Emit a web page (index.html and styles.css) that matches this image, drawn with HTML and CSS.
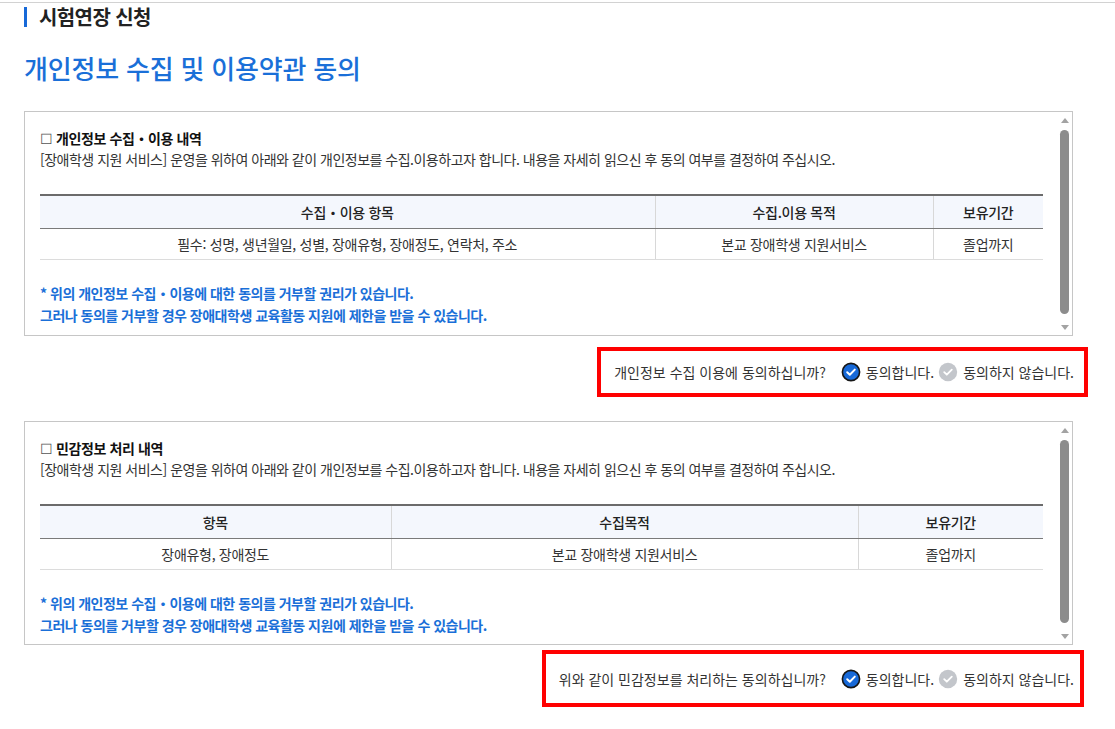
FILE: index.html
```html
<!DOCTYPE html>
<html lang="ko">
<head>
<meta charset="utf-8">
<title>시험연장 신청</title>
<link rel="stylesheet" href="styles.css">
</head>
<body>
<div class="topbar"></div>
<div class="page">
  <h2 class="section-title">시험연장 신청</h2>
  <h1 class="page-title">개인정보 수집 및 이용약관 동의</h1>

  <div class="panel">
    <div class="panel-body">
      <p class="panel-heading"><span class="box-mark">☐</span> 개인정보 수집・이용 내역</p>
      <p class="panel-desc">[장애학생 지원 서비스] 운영을 위하여 아래와 같이 개인정보를 수집.이용하고자 합니다. 내용을 자세히 읽으신 후 동의 여부를 결정하여 주십시오.</p>
      <table class="info-table">
        <colgroup>
          <col class="c1a"><col class="c2a"><col class="c3a">
        </colgroup>
        <thead>
          <tr><th>수집・이용 항목</th><th>수집.이용 목적</th><th>보유기간</th></tr>
        </thead>
        <tbody>
          <tr><td>필수: 성명, 생년월일, 성별, 장애유형, 장애정도, 연락처, 주소</td><td>본교 장애학생 지원서비스</td><td>졸업까지</td></tr>
        </tbody>
      </table>
      <p class="notice">* 위의 개인정보 수집・이용에 대한 동의를 거부할 권리가 있습니다.<br>그러나 동의를 거부할 경우 장애대학생 교육활동 지원에 제한을 받을 수 있습니다.</p>
    </div>
    <div class="scrollbar">
      <span class="arrow-up"></span>
      <span class="thumb"></span>
      <span class="arrow-down"></span>
    </div>
  </div>

  <div class="consent consent-a">
    <div class="consent-box">
      <span class="question">개인정보 수집 이용에 동의하십니까?</span>
      <label class="choice">
        <svg class="check" width="20" height="20" viewBox="0 0 20 20"><circle cx="10" cy="10" r="8.6" fill="#1769d8" stroke="#161616" stroke-width="1.6"/><path d="M6.2 10.2 L8.8 12.7 L13.8 7.6" fill="none" stroke="#fff" stroke-width="2" stroke-linecap="round" stroke-linejoin="round"/></svg>
        <span>동의합니다.</span>
      </label>
      <label class="choice">
        <svg class="check" width="20" height="20" viewBox="0 0 20 20"><circle cx="10" cy="10" r="9.2" fill="#c3c6cb"/><path d="M6.2 10.2 L8.8 12.7 L13.8 7.6" fill="none" stroke="#fff" stroke-width="1.8" stroke-linecap="round" stroke-linejoin="round"/></svg>
        <span>동의하지 않습니다.</span>
      </label>
    </div>
  </div>

  <div class="panel panel-second">
    <div class="panel-body">
      <p class="panel-heading"><span class="box-mark">☐</span> 민감정보 처리 내역</p>
      <p class="panel-desc">[장애학생 지원 서비스] 운영을 위하여 아래와 같이 개인정보를 수집.이용하고자 합니다. 내용을 자세히 읽으신 후 동의 여부를 결정하여 주십시오.</p>
      <table class="info-table">
        <colgroup>
          <col class="c1b"><col class="c2b"><col class="c3b">
        </colgroup>
        <thead>
          <tr><th>항목</th><th>수집목적</th><th>보유기간</th></tr>
        </thead>
        <tbody>
          <tr><td>장애유형, 장애정도</td><td>본교 장애학생 지원서비스</td><td>졸업까지</td></tr>
        </tbody>
      </table>
      <p class="notice">* 위의 개인정보 수집・이용에 대한 동의를 거부할 권리가 있습니다.<br>그러나 동의를 거부할 경우 장애대학생 교육활동 지원에 제한을 받을 수 있습니다.</p>
    </div>
    <div class="scrollbar">
      <span class="arrow-up"></span>
      <span class="thumb"></span>
      <span class="arrow-down"></span>
    </div>
  </div>

  <div class="consent consent-b">
    <div class="consent-box">
      <span class="question">위와 같이 민감정보를 처리하는 동의하십니까?</span>
      <label class="choice">
        <svg class="check" width="20" height="20" viewBox="0 0 20 20"><circle cx="10" cy="10" r="8.6" fill="#1769d8" stroke="#161616" stroke-width="1.6"/><path d="M6.2 10.2 L8.8 12.7 L13.8 7.6" fill="none" stroke="#fff" stroke-width="2" stroke-linecap="round" stroke-linejoin="round"/></svg>
        <span>동의합니다.</span>
      </label>
      <label class="choice">
        <svg class="check" width="20" height="20" viewBox="0 0 20 20"><circle cx="10" cy="10" r="9.2" fill="#c3c6cb"/><path d="M6.2 10.2 L8.8 12.7 L13.8 7.6" fill="none" stroke="#fff" stroke-width="1.8" stroke-linecap="round" stroke-linejoin="round"/></svg>
        <span>동의하지 않습니다.</span>
      </label>
    </div>
  </div>
</div>
</body>
</html>
```

FILE: styles.css
```css
html, body {
  margin: 0;
  padding: 0;
  background: #fff;
}
body {
  font-family: "Noto Sans CJK KR", "Noto Sans", sans-serif;
  color: #333;
}
.topbar {
  margin-top: 2px;
  height: 1px;
  background: #d2d2d2;
}
.page {
  padding-left: 24px;
  width: 1049px;
}
.section-title {
  margin: 4px 0 0 0;
  border-left: 3px solid #1769d8;
  padding-left: 12px;
  font-size: 20px;
  line-height: 20px;
  font-weight: 700;
  color: #222;
  letter-spacing: -0.6px;
}
.page-title {
  margin: 25px 0 0 0;
  font-size: 26px;
  line-height: 32px;
  font-weight: 500;
  color: #1a6fd8;
  letter-spacing: -0.2px;
}
.panel {
  margin-top: 27px;
  height: 225px;
  box-sizing: border-box;
  border: 1px solid #c6c6c6;
  display: flex;
  overflow: hidden;
}
.panel-second {
  margin-top: 24px;
  height: 224px;
}
.panel-body {
  flex: 1;
  padding: 16px 15px 0 15px;
  overflow: hidden;
}
.panel-heading {
  margin: 0;
  font-size: 14px;
  line-height: 21px;
  font-weight: 700;
  color: #111;
  letter-spacing: -0.4px;
}
.box-mark {
  font-weight: 400;
  color: #555;
  letter-spacing: -0.5px;
}
.panel-desc {
  margin: 0;
  font-size: 14px;
  line-height: 21px;
  color: #333;
  letter-spacing: -0.5px;
}
.info-table {
  margin-top: 24px;
  width: 100%;
  border-collapse: collapse;
  table-layout: fixed;
  border-top: 2px solid #6b6b6b;
  font-size: 14px;
  letter-spacing: -0.3px;
}
.c1a { width: 615px; }
.c2a { width: 278px; }
.c3a { width: 110px; }
.c1b { width: 351px; }
.c2b { width: 467px; }
.c3b { width: 185px; }
.info-table th {
  height: 32px;
  padding: 0;
  background: #f4f7fd;
  font-weight: 500;
  color: #222;
  border-bottom: 1px solid #7a7a7a;
  border-left: 1px solid #d8d8d8;
}
.info-table td {
  height: 30px;
  padding: 0;
  text-align: center;
  color: #333;
  border-bottom: 1px solid #dcdcdc;
  border-left: 1px solid #d8d8d8;
}
.info-table th:first-child,
.info-table td:first-child {
  border-left: none;
}
.notice {
  margin: 22px 0 0 0;
  font-size: 14px;
  line-height: 22px;
  font-weight: 700;
  color: #1a6fd8;
  letter-spacing: -0.5px;
}
.scrollbar {
  width: 15px;
  display: flex;
  flex-direction: column;
  align-items: center;
  padding: 6px 0 5px 0;
  box-sizing: border-box;
}
.arrow-up {
  width: 0;
  height: 0;
  border-left: 4px solid transparent;
  border-right: 4px solid transparent;
  border-bottom: 5px solid #a3a3a3;
}
.arrow-down {
  width: 0;
  height: 0;
  border-left: 4px solid transparent;
  border-right: 4px solid transparent;
  border-top: 5px solid #a3a3a3;
}
.thumb {
  width: 9px;
  flex: 1;
  margin: 7px 0 11px 0;
  background: #8c8c8c;
  border-radius: 5px;
}
.consent {
  display: flex;
  justify-content: flex-end;
}
.consent-a {
  margin-top: 11px;
  margin-right: -15px;
}
.consent-b {
  margin-top: 5px;
  margin-right: -11px;
}
.consent-box {
  border: 4px solid #ff0000;
  display: flex;
  align-items: center;
  font-size: 14px;
  line-height: 20px;
  color: #333;
  letter-spacing: 0;
}
.consent-a .consent-box {
  padding: 11px 10px 11px 13px;
}
.consent-b .consent-box {
  padding: 15px 6px 14px 13px;
}
.question {
  margin-right: 15px;
}
.choice {
  display: flex;
  align-items: center;
  gap: 5px;
  margin-right: 4px;
}
.choice:last-child {
  margin-right: 0;
}
.check {
  display: block;
}
```
